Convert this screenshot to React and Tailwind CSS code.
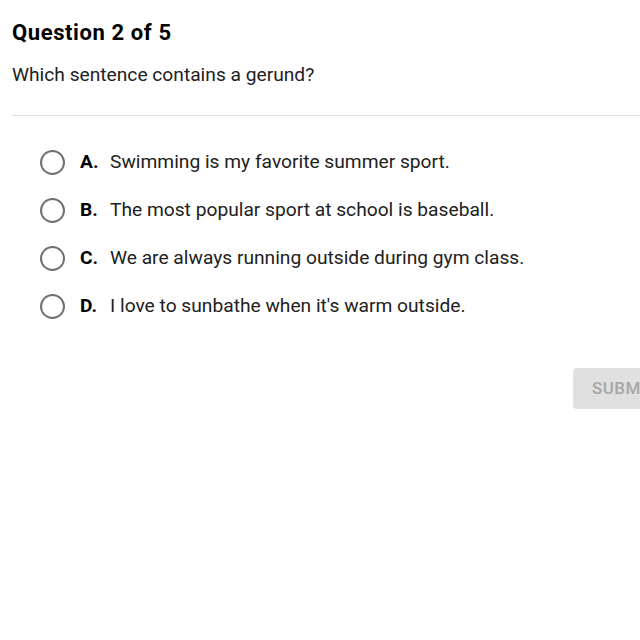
import React from 'react';

const options = [
  { letter: 'A.', text: 'Swimming is my favorite summer sport.' },
  { letter: 'B.', text: 'The most popular sport at school is baseball.' },
  { letter: 'C.', text: 'We are always running outside during gym class.' },
  { letter: 'D.', text: "I love to sunbathe when it's warm outside." },
];

export default function App() {
  return (
    <div className="w-[640px] h-[640px] overflow-hidden bg-white text-[#212121]" style={{ fontFamily: 'Roboto, "Liberation Sans", sans-serif' }}>
      <div className="pl-3 pt-[19px]">
        <h1 className="text-[22px] leading-[28px] font-bold text-black tracking-[0.6px]">Question 2 of 5</h1>
        <p className="mt-[16px] text-[19.2px] leading-[24px] text-[#212121]">Which sentence contains a gerund?</p>
        <div className="mt-[28px] h-px bg-[#e0e0e0]" />
      </div>

      <div className="pl-[40px] pt-[34px] flex flex-col gap-[24px]">
        {options.map((o) => (
          <label key={o.letter} className="flex items-center h-[24px]">
            <span className="w-[25px] h-[25px] rounded-full border-2 border-[#707070] shrink-0" />
            <span className="ml-[15px] w-[30px] text-[19.2px] font-bold text-black">{o.letter}</span>
            <span className="text-[19.2px] text-[#212121]">{o.text}</span>
          </label>
        ))}
      </div>

      <div className="flex mt-[50px] overflow-hidden">
        <button className="ml-[573px] shrink-0 w-[100px] h-[41px] rounded-[4px] bg-[#e0e0e0] text-[#a6a6a6] text-[17px] font-medium tracking-wide text-left pl-[19px]">
          SUBMIT
        </button>
      </div>
    </div>
  );
}
